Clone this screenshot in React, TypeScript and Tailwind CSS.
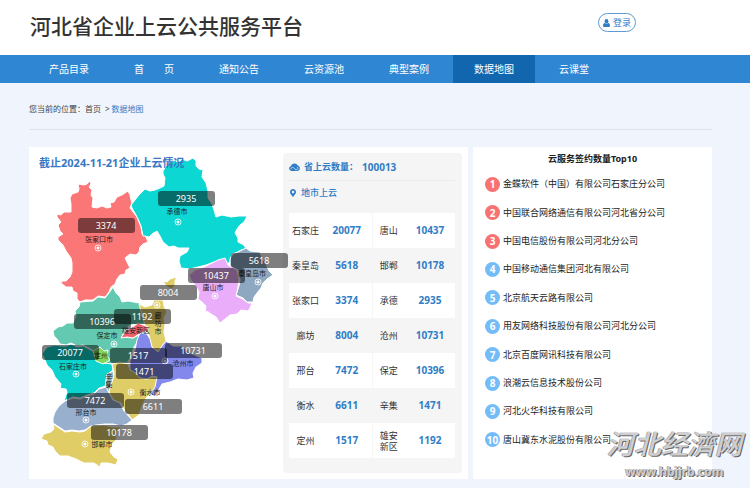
import clsx from 'clsx';
import { FaMapMarkerAlt } from 'react-icons/fa';

type Region = {
  name: string;
  fill: string;
  points: string;
};

type City = {
  name: string;
  count: number;
  label: [number, number];
  text: [number, number];
  dot?: [number, number];
  vertical?: boolean;
};

const navItems = ['产品目录', '首\u2003\u2003页', '通知公告', '云资源池', '典型案例', '数据地图', '云课堂'];
const activeItem = '数据地图';

const regions: Region[] = [
  {
    name: '张家口',
    fill: '#fb7676',
    points:
      '78,184 84,185 87,184 90,181 91,184 89,187 92,190 91,195 93,198 92,207 97,208 102,206 107,208 111,207 110,203 114,202 117,197 122,195 128,191 130,195 131,200 132,203 130,208 137,217 139,222 141,227 142,234 145,235 148,242 143,244 140,247 139,252 136,255 130,254 125,258 127,262 130,268 126,270 125,274 120,275 117,279 115,284 111,287 109,292 105,297 98,296 93,300 85,300 80,302 77,299 77,293 73,291 72,287 66,287 61,283 62,281 66,281 70,277 72,272 72,263 71,258 66,251 63,245 58,240 58,237 63,234 60,231 58,225 61,222 57,217 57,214 61,215 64,212 71,212 71,204 70,198 72,194 78,192 79,189',
  },
  {
    name: '承德',
    fill: '#0cd7d3',
    points:
      '175,160 178,163 182,159 187,161 193,158 196,161 196,166 199,169 203,170 202,177 206,183 208,191 208,198 212,204 214,210 216,217 222,215 231,217 239,216 247,216 244,222 240,225 237,229 235,233 238,238 238,242 244,245 246,249 241,250 238,252 232,254 229,263 222,264 214,262 206,265 198,267 189,269 181,268 179,261 180,256 187,252 189,248 178,248 174,246 169,247 163,242 160,236 157,231 152,234 149,237 145,236 143,236 141,226 138,219 136,215 132,208 131,205 135,200 139,195 145,189 150,191 155,190 160,188 164,186 165,178 163,174 163,171 166,166 169,163',
  },
  {
    name: '秦皇岛',
    fill: '#8ea8c2',
    points:
      '233,254 238,252 246,248 250,251 260,252 262,258 266,264 269,271 273,275 267,279 263,283 261,288 257,293 254,297 253,302 247,302 243,298 236,295 239,286 240,280 238,270 230,266 230,259',
  },
  {
    name: '唐山',
    fill: '#e9adfa',
    points:
      '212,263 218,260 225,258 228,265 237,270 239,279 238,287 236,296 243,299 248,303 252,303 250,308 248,311 241,310 237,314 230,315 225,319 220,323 216,317 211,314 207,311 205,313 206,306 202,302 198,299 199,292 196,286 191,280 189,275 195,270 204,267',
  },
  { name: '廊坊北', fill: '#dfcd68', points: '163,281 167,282 170,279 177,277 175,281 175,286 171,289 166,286' },
  {
    name: '保定',
    fill: '#63cab1',
    points:
      '113,287 116,293 120,297 122,302 128,301 139,303 145,307 142,315 147,324 139,324 130,325 125,329 122,337 133,338 139,335 138,341 134,347 131,357 127,363 110,364 103,364 95,352 89,348 83,345 77,346 71,343 66,345 60,344 57,339 54,336 53,331 58,327 63,326 67,323 73,323 76,316 75,311 79,307 80,302 93,301 98,297 105,298 109,293',
  },
  {
    name: '廊坊',
    fill: '#dfcd68',
    points:
      '139,304 145,307 152,305 154,300 163,300 164,306 167,312 164,318 165,325 164,332 166,341 163,345 159,351 155,352 151,346 149,335 146,329 144,322 142,315',
  },
  {
    name: '沧州',
    fill: '#8389ec',
    points:
      '140,333 147,334 150,339 152,347 158,352 162,346 166,341 173,346 182,346 190,353 202,358 202,363 196,367 193,373 194,378 187,380 178,379 170,382 162,384 158,391 155,397 151,394 154,386 157,377 152,376 147,379 140,378 130,369 130,361 135,350 137,340',
  },
  { name: '雄安', fill: '#f0626b', points: '121,338 126,330 133,327 138,323 148,327 148,331 139,334 133,338 127,337' },
  {
    name: '石家庄',
    fill: '#0cd3cd',
    points:
      '47,347 55,345 61,346 66,346 71,344 77,347 83,346 89,349 95,352 103,363 112,364 113,370 107,375 106,381 106,386 99,388 94,393 87,395 80,398 73,397 64,401 67,392 66,389 60,388 61,384 55,377 52,370 47,365 45,360 42,354',
  },
  { name: '定州', fill: '#80d957', points: '93,351 100,347 104,351 108,350 107,356 110,360 103,364 96,361' },
  {
    name: '衡水',
    fill: '#dfcd68',
    points:
      '112,364 120,362 128,364 130,370 136,373 140,378 147,379 152,377 157,377 155,387 151,393 146,398 142,406 139,415 132,420 128,414 125,411 121,403 114,400 110,394 108,390 112,382 114,373',
  },
  { name: '辛集', fill: '#93bdd1', points: '107,374 113,371 114,376 111,384 109,392 105,387' },
  {
    name: '邢台',
    fill: '#98b0ce',
    points:
      '65,401 73,398 80,399 87,396 94,394 99,389 106,387 109,393 113,400 120,403 124,411 132,420 127,424 121,426 113,424 105,424 96,425 91,426 85,430 79,431 72,430 65,431 59,427 53,423 53,418 55,412 59,406',
  },
  {
    name: '邯郸',
    fill: '#e0cd66',
    points:
      '53,424 59,428 65,432 72,431 80,432 85,431 91,426 104,425 112,427 121,427 117,432 116,440 112,444 110,452 114,457 118,459 116,465 108,463 101,463 100,467 94,463 84,463 76,459 68,456 60,456 55,451 53,447 48,445 47,441 41,439 44,434 51,432 54,429',
  },
];

const cities: City[] = [
  { name: '张家口市', count: 3374, label: [78, 218], text: [99, 239], dot: [98, 248] },
  { name: '承德市', count: 2935, label: [158, 191], text: [177, 211], dot: [178, 222] },
  { name: '秦皇岛市', count: 5618, label: [231, 253], text: [252, 273], dot: [258, 282] },
  { name: '唐山市', count: 10437, label: [188, 268], text: [213, 287], dot: [215, 296] },
  { name: '廊坊市', count: 8004, label: [140, 285], text: [158, 315], dot: [157, 305], vertical: true },
  { name: '保定市', count: 10396, label: [74, 314], text: [107, 335], dot: [114, 344] },
  { name: '雄安新区', count: 1192, label: [114, 309], text: [136, 330] },
  { name: '石家庄市', count: 20077, label: [42, 345], text: [73, 366], dot: [76, 374] },
  { name: '定州', count: 1517, label: [110, 348], text: [101, 355] },
  { name: '沧州市', count: 10731, label: [165, 343], text: [183, 363], dot: [165, 361] },
  { name: '辛集', count: 1471, label: [116, 364], text: [109, 376], vertical: true },
  { name: '邢台市', count: 7472, label: [67, 393], text: [86, 412], dot: [86, 420] },
  { name: '衡水市', count: 6611, label: [125, 399], text: [150, 392], dot: [131, 392] },
  { name: '邯郸市', count: 10178, label: [91, 425], text: [102, 444], dot: [85, 444] },
];

const stats: [string, number, string, number][] = [
  ['石家庄', 20077, '唐山', 10437],
  ['秦皇岛', 5618, '邯郸', 10178],
  ['张家口', 3374, '承德', 2935],
  ['廊坊', 8004, '沧州', 10731],
  ['邢台', 7472, '保定', 10396],
  ['衡水', 6611, '辛集', 1471],
  ['定州', 1517, '雄安新区', 1192],
];

const companies = [
  '金蝶软件（中国）有限公司石家庄分公司',
  '中国联合网络通信有限公司河北省分公司',
  '中国电信股份有限公司河北分公司',
  '中国移动通信集团河北有限公司',
  '北京航天云路有限公司',
  '用友网络科技股份有限公司河北分公司',
  '北京百度网讯科技有限公司',
  '浪潮云信息技术股份公司',
  '河北火华科技有限公司',
  '唐山冀东水泥股份有限公司',
];

function UserIcon() {
  return (
    <svg viewBox="0 0 14 16" className="h-2 w-[7px]" fill="currentColor" aria-hidden="true">
      <ellipse cx="7" cy="4.500" rx="3.800" ry="4.500" />
      <path d="M3.500 8C1 8.500 0 10.500 0 13.500 0 15 1 16 2.500 16h9c1.500 0 2.500-1 2.500-2.500C14 10.500 13 8.500 10.500 8c-2 2-5 2-7 0Z" />
    </svg>
  );
}

function CloudIcon() {
  return (
    <svg viewBox="0 0 22 16" className="h-2 w-[11px]" aria-hidden="true">
      <path fill="currentColor" d="M5 16A5 5 0 0 1 3.600 6.300 A7.500 7.500 0 0 1 17.600 5.200 A5.500 5.500 0 0 1 17 16Z" />
      <path
        d="M3.500 12.500C4 8.500 8 7.500 10 10L13 13M12 13.200h3.500c3 0 3.500-4.500.3-4.700"
        fill="none"
        stroke="#f5f5f5"
        strokeWidth="1.300"
      />
    </svg>
  );
}

function ProvinceMap() {
  return (
    <svg
      viewBox="29 147 254 332"
      className="relative z-10 h-[332px] w-[254px] shrink-0 overflow-visible"
      role="img"
      aria-label="河北省各市上云数量"
    >
      {regions.map((region) => (
        <polygon
          key={region.name}
          points={region.points}
          fill={region.fill}
          stroke="#fff"
          strokeWidth="1"
          strokeLinejoin="round"
        />
      ))}
      {cities.map(({ name, dot }) =>
        dot ? (
          <g key={name}>
            <circle cx={dot[0]} cy={dot[1]} r="3" fill="none" stroke="#fff" strokeOpacity="0.8" />
            <circle cx={dot[0]} cy={dot[1]} r="1.500" fill="#fff" />
          </g>
        ) : null,
      )}
      <g fontSize="7" fill="#1c1c1c" textAnchor="middle">
        {cities.map(({ name, text, vertical }) =>
          vertical ? (
            <text key={name}>
              {name.split('').map((char, index) => (
                <tspan key={char} x={text[0]} y={text[1] + 3 + index * 8}>
                  {char}
                </tspan>
              ))}
            </text>
          ) : (
            <text key={name} x={text[0]} y={text[1] + 3}>
              {name}
            </text>
          ),
        )}
      </g>
      {cities.map(({ name, count, label }) => (
        <g key={name}>
          <rect x={label[0]} y={label[1]} width="57" height="15" rx="3" fill="#000" fillOpacity="0.5" />
          <text x={label[0] + 28} y={label[1] + 11} fontSize="9" fill="#fff" textAnchor="middle">
            {count}
          </text>
        </g>
      ))}
    </svg>
  );
}

function StatsPanel() {
  return (
    <section className="my-1.5 mr-1.5 flex-1 rounded-sm bg-[#f5f5f5] pr-[7px] pb-3.5 pl-1.5 text-[9px]">
      <div className="flex h-7 items-center gap-1 border-b border-[#ececec] font-bold text-[#2f7dc6]">
        <CloudIcon />
        <span>省上云数量：</span>
        <span className="text-[10px]">100013</span>
      </div>
      <div className="mb-2 flex h-6 items-center gap-1 font-medium text-[#2f7dc6]">
        <FaMapMarkerAlt size={8} />
        <span>地市上云</span>
      </div>
      <table className="w-full table-fixed border-collapse text-center leading-[11px] text-[#333]">
        <tbody>
          {stats.map(([leftName, leftCount, rightName, rightCount]) => (
            <tr key={leftName} className="h-[35px] odd:bg-white">
              <td className="w-[33px]">{leftName}</td>
              <td className="border-r border-[#f5f5f5] text-[10px] font-bold text-[#2f7dc6]">{leftCount}</td>
              <td className="w-[33px] px-[7px]">{rightName}</td>
              <td className="text-[10px] font-bold text-[#2f7dc6]">{rightCount}</td>
            </tr>
          ))}
        </tbody>
      </table>
    </section>
  );
}

function TopCompanies() {
  return (
    <section className="w-[239px] shrink-0 bg-white text-[9px] text-[#222]">
      <h2 className="pt-1.5 pb-[5px] text-center font-bold">云服务签约数量Top10</h2>
      <ol className="flex h-[284px] flex-col pl-3">
        {companies.map((company, index) => (
          <li key={company} className="flex flex-1 items-center gap-[3px]">
            <span
              className={clsx(
                'flex size-[15px] shrink-0 items-center justify-center rounded-full text-[10px] font-bold text-white',
                index < 3 ? 'bg-[#f87272]' : 'bg-[#74bcf8]',
              )}
            >
              {index + 1}
            </span>
            <span className="whitespace-nowrap">{company}</span>
          </li>
        ))}
      </ol>
    </section>
  );
}

export default function App() {
  return (
    <div className="relative min-h-screen bg-[#f0f5fd] font-['Noto_Sans','Noto_Sans_CJK_SC',sans-serif] leading-3">
      <header className="flex h-[55px] items-center justify-between bg-white pr-[114px] pb-1 pl-[30px]">
        <h1 className="text-[21px] leading-7 font-medium text-[#333]">河北省企业上云公共服务平台</h1>
        <button
          type="button"
          className="mb-1.5 flex h-[19px] w-[38px] items-center justify-center gap-[3px] rounded-full border border-[#5d9bd0] text-[9px] text-[#2f7dc6]"
        >
          <UserIcon />
          登录
        </button>
      </header>

      <nav className="flex h-7 gap-[3px] bg-[#2f87d3] pl-7 text-[10px] text-white">
        {navItems.map((item) => (
          <a
            key={item}
            href="#"
            className={clsx('flex items-center px-[21px] whitespace-nowrap', item === activeItem && 'bg-[#1166ae]')}
          >
            {item}
          </a>
        ))}
      </nav>

      <main className="pr-[38px] pb-2 pl-[29px]">
        <div className="mb-[17px] flex border-b border-[#dde2ec] pt-5 pb-3.5 text-[8px] text-[#444]">
          <span>您当前的位置：</span>
          <a href="#">首页</a>
          <span className="mr-0.5 ml-1">&gt;</span>
          <a href="#" className="text-[#2f7dc6]">
            数据地图
          </a>
        </div>

        <div className="flex gap-[5px]">
          <section className="relative flex flex-1 bg-white">
            <h2 className="absolute top-2.5 left-2.5 z-20 text-[11px] font-bold text-[#3a78c4]">
              截止2024-11-21企业上云情况
            </h2>
            <ProvinceMap />
            <StatsPanel />
          </section>
          <TopCompanies />
        </div>
      </main>

      <div className="pointer-events-none absolute right-2 bottom-2 text-center font-bold text-[#cfcfd2] [text-shadow:1px_1px_0_#666,-1px_0_0_#aaa]">
        <p className="text-[27px] leading-10 font-medium italic">河北经濟网</p>
        <p className="text-[12px] leading-4">www.hbjjrb.com</p>
      </div>
    </div>
  );
}
